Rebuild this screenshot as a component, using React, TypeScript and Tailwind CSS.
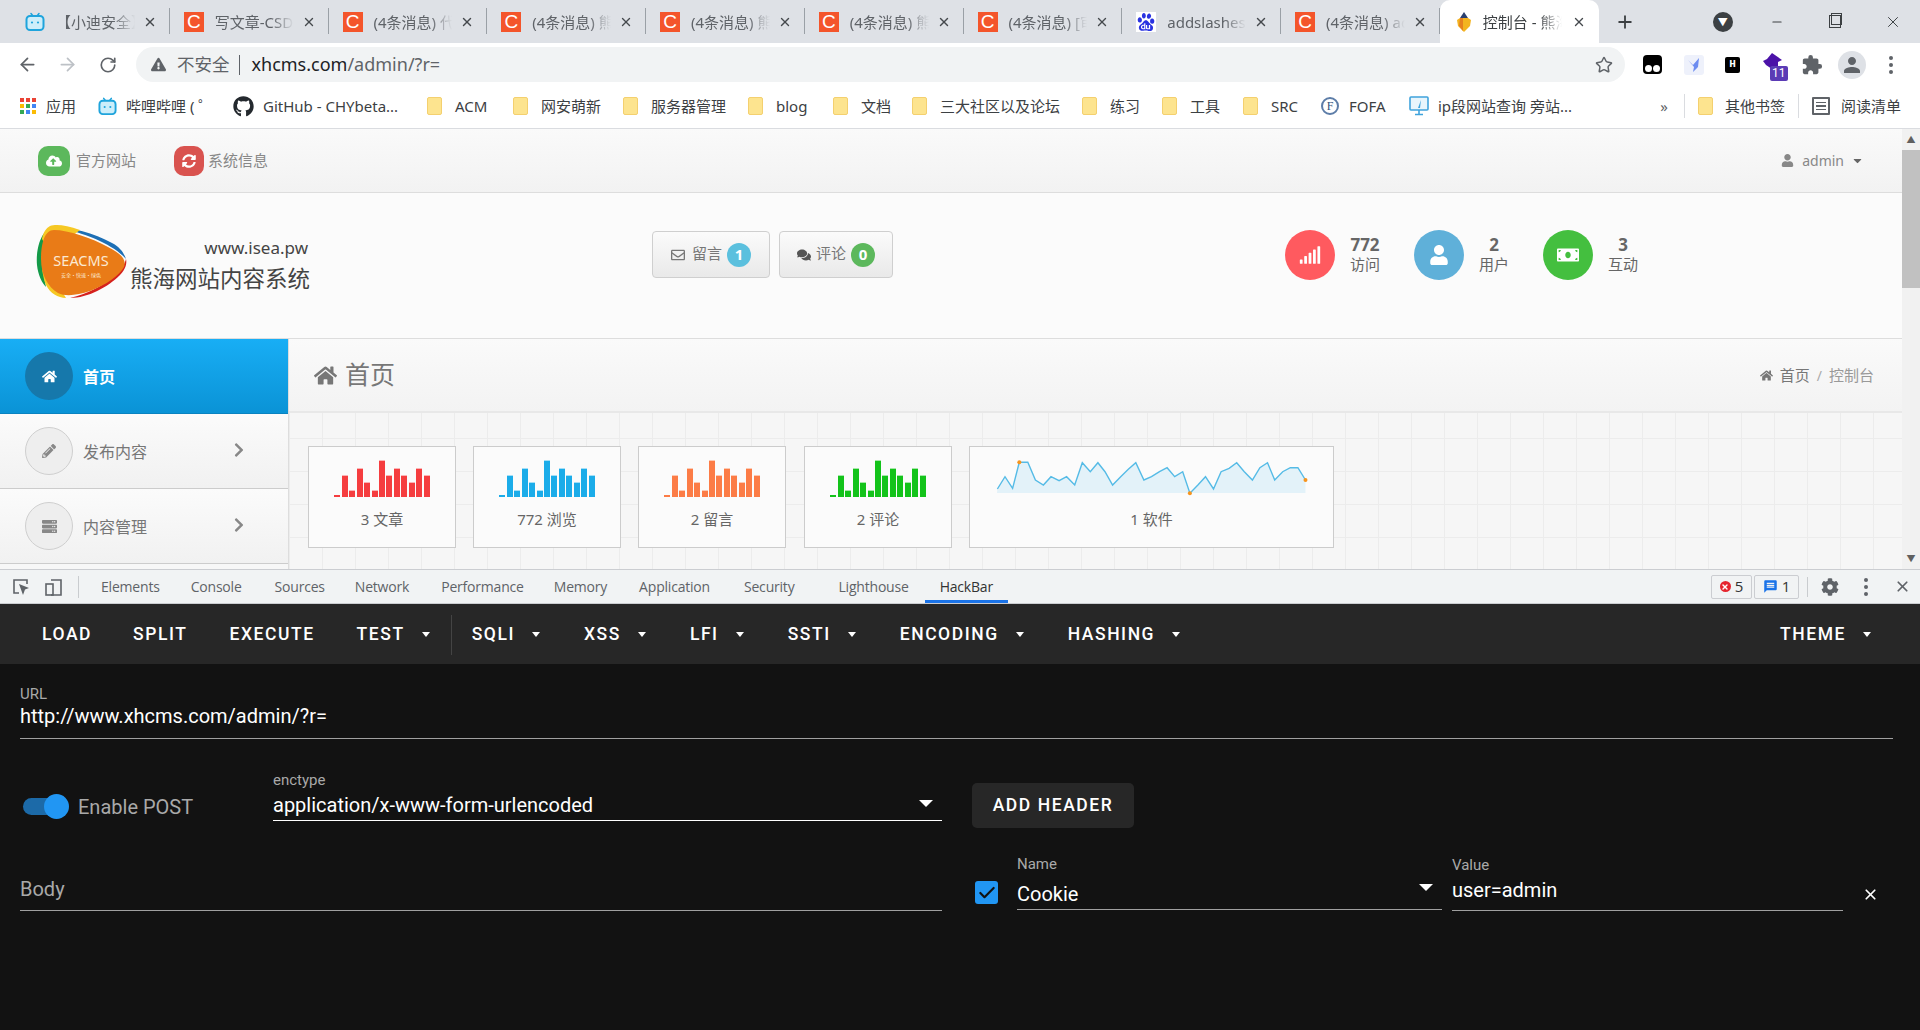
import {
  FaHome,
  FaPencilAlt,
  FaServer,
  FaRegEnvelope,
  FaComments,
  FaSignal,
  FaUser,
  FaMoneyBill,
  FaChevronRight,
  FaCloudUploadAlt,
  FaSyncAlt,
  FaGithub,
  FaExclamationTriangle,
  FaCaretDown,
  FaCog,
} from "react-icons/fa";
import { SiBaidu } from "react-icons/si";
import { MdExtension, MdPerson, MdMessage } from "react-icons/md";
import { ArrowLeft, ArrowRight, RotateCw, Star, Plus, Minus, X, Check } from "lucide-react";

const cjk = "font-['Noto_Sans','Noto_Sans_CJK_SC',sans-serif]";
const roboto = "font-['Roboto','Noto_Sans_CJK_SC',sans-serif]";

const Bili = ({ size = 20 }: { size?: number }) => (
  <svg width={size} height={size} viewBox="0 0 20 20" fill="none">
    <path d="M6 1.5 8 4M14 1.5 12 4" stroke="#1fa4dc" strokeWidth="1.6" strokeLinecap="round" />
    <rect x="1.5" y="4" width="17" height="14" rx="3.5" fill="#cdeefa" stroke="#1fa4dc" strokeWidth="2" />
    <circle cx="7" cy="10.5" r="1.1" fill="#1fa4dc" />
    <circle cx="13" cy="10.5" r="1.1" fill="#1fa4dc" />
  </svg>
);

const Csdn = () => (
  <span className="flex h-5 w-5 items-center justify-center bg-[#f4552b] font-['Liberation_Sans',sans-serif] text-[19px] leading-none text-white">
    C
  </span>
);

const Pencil = () => (
  <svg width="20" height="22" viewBox="0 0 20 22">
    <path d="M10 1 14 7H6z" fill="#2a3f6f" />
    <path d="M3 9 6 7h8l3 2-1 6-6 6-6-6z" fill="#f3b420" />
    <path d="M6 7h3v13L5 15z" fill="#e5801f" />
  </svg>
);

const tabs = [
  { title: "【小迪安全】Web安全", icon: <Bili /> },
  { title: "写文章-CSDN博客", icon: <Csdn /> },
  { title: "(4条消息) 代码审计", icon: <Csdn /> },
  { title: "(4条消息) 熊海CMS", icon: <Csdn /> },
  { title: "(4条消息) 熊海CMS", icon: <Csdn /> },
  { title: "(4条消息) 熊海CMS", icon: <Csdn /> },
  { title: "(4条消息) [审计]", icon: <Csdn /> },
  {
    title: "addslashes_百度",
    icon: (
      <span className="flex h-5 w-5 items-center justify-center bg-white">
        <SiBaidu size={18} className="text-[#2932e1]" />
      </span>
    ),
  },
  { title: "(4条消息) addslashes", icon: <Csdn /> },
];

const Folder = () => (
  <span className="h-[18px] w-[15px] shrink-0 rounded-[2px] border border-[#f4d06f] bg-[#fde48f]" />
);

const Apps = () => (
  <span className="grid w-[16px] shrink-0 grid-cols-3 gap-[2px]">
    {["#ea4335", "#ea4335", "#ea4335", "#fbbc04", "#34a853", "#4285f4", "#34a853", "#4285f4", "#fbbc04"].map((c, i) => (
      <span key={i} className="h-[4px] w-[4px]" style={{ background: c }} />
    ))}
  </span>
);

const bookmarks = [
  { w: "w-[78px]", gap: "gap-[10px]", label: "应用", icon: <Apps /> },
  { w: "w-[135px]", gap: "gap-[9px]", label: "哔哩哔哩 ( ゜", icon: <Bili size={19} /> },
  { w: "w-[194px]", gap: "gap-[9px]", label: "GitHub - CHYbeta...", icon: <FaGithub size={21} className="shrink-0 text-[#24292e]" /> },
  { w: "w-[86px]", gap: "gap-[13px]", label: "ACM", icon: <Folder /> },
  { w: "w-[110px]", gap: "gap-[13px]", label: "网安萌新", icon: <Folder /> },
  { w: "w-[125px]", gap: "gap-[13px]", label: "服务器管理", icon: <Folder /> },
  { w: "w-[85px]", gap: "gap-[13px]", label: "blog", icon: <Folder /> },
  { w: "w-[79px]", gap: "gap-[13px]", label: "文档", icon: <Folder /> },
  { w: "w-[170px]", gap: "gap-[13px]", label: "三大社区以及论坛", icon: <Folder /> },
  { w: "w-[80px]", gap: "gap-[13px]", label: "练习", icon: <Folder /> },
  { w: "w-[81px]", gap: "gap-[13px]", label: "工具", icon: <Folder /> },
  { w: "w-[78px]", gap: "gap-[13px]", label: "SRC", icon: <Folder /> },
  {
    w: "w-[88px]",
    gap: "gap-[10px]",
    label: "FOFA",
    icon: (
      <span className="flex h-[18px] w-[18px] items-center justify-center rounded-full border-2 border-[#5d7da8] font-['Liberation_Serif',serif] text-[12px] leading-none text-[#33527c]">
        F
      </span>
    ),
  },
  {
    w: "w-[245px]",
    gap: "gap-[9px]",
    label: "ip段网站查询 旁站...",
    icon: (
      <svg width="20" height="20" viewBox="0 0 20 20" className="shrink-0">
        <rect x="1" y="1" width="18" height="13" rx="1" fill="#e8f5fc" stroke="#3fa3dc" strokeWidth="1.6" />
        <path d="M9 12 12 4l-1 8z" fill="#3fa3dc" />
        <path d="M10 14v4M6 18.5h8" stroke="#3fa3dc" strokeWidth="1.6" />
      </svg>
    ),
  },
];

function BrowserChrome() {
  return (
    <div className={`${cjk} text-[15px] text-[#5f6368]`}>
      <div className="flex h-[43px] bg-[#dee1e6] pl-[11px]">
        {tabs.map((tab, i) => (
          <div key={i} className="relative flex h-full w-[158.75px] shrink-0 items-center pl-[14px] pr-[13px]">
            <span className="flex w-[20px] shrink-0 justify-center">{tab.icon}</span>
            <span className="ml-[11px] mr-[8px] min-w-0 flex-1 overflow-hidden whitespace-nowrap pt-[1px] [mask-image:linear-gradient(to_right,black_72%,transparent)]">
              {tab.title}
            </span>
            <X size={14} strokeWidth={2.4} className="shrink-0 text-[#45494d]" />
            <span className="absolute right-0 top-[8px] h-[26px] w-px bg-[#9aa0a6]" />
          </div>
        ))}
        <div className="flex h-full w-[159px] shrink-0 items-center rounded-t-[10px] bg-white pl-[14px] pr-[13px]">
          <span className="flex w-[20px] shrink-0 justify-center"><Pencil /></span>
          <span className="ml-[9px] mr-[10px] min-w-0 flex-1 overflow-hidden whitespace-nowrap pt-[1px] text-[#3c4043] [mask-image:linear-gradient(to_right,black_72%,transparent)]">
            控制台 - 熊海网站内容系统
          </span>
          <X size={14} strokeWidth={2.4} className="shrink-0 text-[#45494d]" />
        </div>
        <div className="flex h-full w-[52px] items-center justify-center">
          <Plus size={20} strokeWidth={2.2} className="text-[#3c4043]" />
        </div>
        <div className="ml-[62px] flex h-full items-center">
          <span className="flex h-[20px] w-[20px] items-center justify-center rounded-full bg-[#3c4043] text-[10px] leading-none text-white">▼</span>
        </div>
        <div className="ml-[24px] flex h-full w-[40px] items-center justify-center"><Minus size={14} className="text-[#3c4043]" /></div>
        <div className="ml-[18px] flex h-full w-[40px] items-center justify-center">
          <span className="relative h-[13px] w-[12px] border border-[#3c4043] before:absolute before:-top-[3px] before:left-[1px] before:h-[12px] before:w-[11px] before:border before:border-[#3c4043]" />
        </div>
        <div className="ml-[18px] flex h-full w-[40px] items-center justify-center"><X size={18} strokeWidth={1.3} className="text-[#3c4043]" /></div>
      </div>

      <div className="flex h-[43px] items-center bg-white">
        <ArrowLeft size={21} strokeWidth={2} className="ml-[17px] text-[#5f6368]" />
        <ArrowRight size={21} strokeWidth={2} className="ml-[19px] text-[#bdc1c6]" />
        <RotateCw size={18} strokeWidth={2.2} className="ml-[21px] text-[#5f6368]" />
        <div className="ml-[19px] flex h-[35px] w-[1489px] items-center rounded-full bg-[#f1f3f4] pl-[15px] pr-[12px]">
          <FaExclamationTriangle size={15} className="text-[#5f6368]" />
          <span className="ml-[11px] text-[17.5px]">不安全</span>
          <span className="ml-[9px] mr-[12px] h-[20px] w-px bg-[#5f6368]" />
          <span className="text-[18px]"><span className="text-[#202124]">xhcms.com</span>/admin/?r=</span>
          <Star size={18} strokeWidth={2} className="ml-auto text-[#5f6368]" />
        </div>
        <span className="ml-[18px] flex h-[19px] w-[19px] items-end justify-center gap-px rounded-[4px] bg-black pb-[2px]">
          <span className="h-[7px] w-[7px] rounded-full bg-white" />
          <span className="h-[7px] w-[7px] rounded-full bg-white" />
        </span>
        <svg width="20" height="20" viewBox="0 0 20 20" className="ml-[22px]">
          <rect width="20" height="20" rx="3" fill="#eef1fb" />
          <path d="M4 5 9 10l6-7-1 9-5 5 1-5z" fill="#6d8cf0" />
        </svg>
        <span className="ml-[21px] flex h-[16px] w-[15px] items-center justify-center rounded-[2px] bg-black font-['Liberation_Mono',monospace] text-[11px] font-bold text-white">H</span>
        <span className="relative ml-[23px] h-[24px] w-[27px]">
          <svg width="24" height="18" viewBox="0 0 24 18"><path d="M9 0 19 7 15 9v4L9 16 3 12 0 8 4 6z" fill="#4b12a8" /></svg>
          <span className={`${roboto} absolute -bottom-[4px] left-[7px] rounded-[2px] bg-[#5b3bb5] px-[2px] text-[12px] leading-[15px] text-white`}>11</span>
        </span>
        <MdExtension size={22} className="ml-[11px] text-[#5f6368]" />
        <span className="ml-[15px] flex h-[28px] w-[28px] items-center justify-center rounded-full bg-[#dee1e6]">
          <MdPerson size={24} className="text-[#5f6368]" />
        </span>
        <span className="ml-[23px] flex flex-col gap-[3px]">
          <span className="h-[4px] w-[4px] rounded-full bg-[#5f6368]" />
          <span className="h-[4px] w-[4px] rounded-full bg-[#5f6368]" />
          <span className="h-[4px] w-[4px] rounded-full bg-[#5f6368]" />
        </span>
      </div>

      <div className="flex h-[43px] items-center border-b border-[#dadce0] bg-white pl-[20px] pb-[2px] text-[15px] text-[#3c4043]">
        {bookmarks.map((b) => (
          <div key={b.label} className={`flex shrink-0 items-center overflow-hidden whitespace-nowrap ${b.w} ${b.gap}`}>
            {b.icon}
            <span>{b.label}</span>
          </div>
        ))}
        <span className="w-[20px] text-center text-[#5f6368]">»</span>
        <span className="ml-[10px] h-[24px] w-px bg-[#dadce0]" />
        <div className="ml-[13px] flex items-center gap-[12px]">
          <Folder />
          <span>其他书签</span>
        </div>
        <span className="ml-[13px] h-[24px] w-px bg-[#dadce0]" />
        <div className="ml-[13px] flex items-center gap-[11px]">
          <span className="flex h-[18px] w-[18px] flex-col justify-center gap-[2px] rounded-[1px] border-2 border-[#5f6368] px-[2px]">
            <span className="h-[1.5px] bg-[#5f6368]" />
            <span className="h-[1.5px] bg-[#5f6368]" />
            <span className="h-[1.5px] bg-[#5f6368]" />
          </span>
          <span>阅读清单</span>
        </div>
      </div>
    </div>
  );
}

function Logo() {
  return (
    <svg width="92" height="74" viewBox="0 0 92 74" className="mb-[8px] shrink-0">
      <path d="M20 2C34 2 58 8 76 18 84 22 88 28 90 34 78 20 50 8 20 2z" fill="#1d6fb5" />
      <path d="M10 6C2 14 0 30 1 40 2 50 6 58 10 62 6 44 6 24 10 6z" fill="#139a48" />
      <path d="M14 1C20 -1 30 0 44 5L14 28 6 14C7 8 10 3 14 1zM6 44 22 60 30 73C22 73 14 68 10 60 8 56 7 50 6 44z" fill="#f6c824" />
      <path d="M34 73C52 73 72 62 84 50 90 44 91 38 90 34 88 44 70 64 34 73z" fill="#d5211d" />
      <path d="M5 34C5 20 8 5 18 5 32 5 56 13 72 22 84 28 91 34 88 42 84 50 70 60 54 66 42 70 30 72 22 68 12 62 5 50 5 34z" fill="#e97b17" />
      <text x="45" y="41" textAnchor="middle" fill="#fbe9d2" fontSize="14.5" fontFamily="'Noto Sans',sans-serif">SEACMS</text>
      <text x="45" y="52" textAnchor="middle" fill="#fbe9d2" fontSize="5" fontFamily="'Noto Sans CJK SC',sans-serif">安全•快速•绿色</text>
    </svg>
  );
}

const barHeights = ["h-[2px]", "h-[22px]", "h-[7px]", "h-[29px]", "h-[15px]", "h-[7px]", "h-[37px]", "h-[22px]", "h-[29px]", "h-[22px]", "h-[15px]", "h-[29px]", "h-[22px]"];

function BarCard({ label, bar, top }: { label: string; bar: string; top: string }) {
  return (
    <div className="flex h-[102px] w-[148px] shrink-0 flex-col items-center border border-[#cccccc] bg-[#fbfbfb] pt-[13px] text-[15px] text-[#666666]">
      <div className="flex h-[37px] items-end gap-[1.45px]">
        {barHeights.map((h, i) => (
          <span key={i} className={`w-[6px] ${i === 0 ? "" : "border-t"} ${h} ${bar} ${top}`} />
        ))}
      </div>
      <span className="mt-[12px] leading-[20px]">{label}</span>
    </div>
  );
}

const spark = [
  [667, 177], [684, 140], [701, 175], [716, 97], [735, 97], [752, 150], [770, 165], [787, 140], [805, 152], [822, 140],
  [840, 165], [857, 98], [875, 125], [892, 98], [908, 125], [925, 165], [943, 140], [960, 118], [977, 98], [995, 150],
  [1012, 140], [1030, 125], [1047, 113], [1064, 140], [1082, 125], [1098, 190], [1116, 165], [1133, 140], [1151, 177],
  [1168, 125], [1186, 115], [1203, 98], [1220, 125], [1238, 150], [1255, 113], [1272, 98], [1288, 150], [1306, 125],
  [1323, 113], [1340, 113], [1357, 150],
].map(([x, y]) => [(x - 666) / 2.24, (y - 90) / 3]);

function SparkCard() {
  const line = spark.map(([x, y]) => `${x.toFixed(1)},${y.toFixed(1)}`).join(" ");
  const last = spark[spark.length - 1];
  return (
    <div className="flex h-[102px] w-[365px] shrink-0 flex-col items-center border border-[#cccccc] bg-[#fbfbfb] pt-[13px] text-[15px] text-[#666666]">
      <svg width="310" height="38" viewBox="0 0 310 38" className="overflow-visible">
        <polygon points={`0,33 ${line} ${last[0]},33`} fill="#e3f2f9" />
        <polyline points={line} fill="none" stroke="#55bbe6" strokeWidth="1.4" />
        <circle cx={spark[3][0]} cy={spark[3][1]} r="2" fill="#f7941d" />
        <circle cx={spark[25][0]} cy={spark[25][1]} r="2" fill="#f7941d" />
        <circle cx={last[0]} cy={last[1]} r="2" fill="#f7941d" />
      </svg>
      <span className="mt-[11px] leading-[20px]">1 软件</span>
    </div>
  );
}

function Stat({ bg, icon, value, label }: { bg: string; icon: React.ReactNode; value: string; label: string }) {
  return (
    <div className="flex w-[129px] shrink-0 items-center">
      <span className={`flex h-[50px] w-[50px] shrink-0 items-center justify-center rounded-full text-white ${bg}`}>{icon}</span>
      <div className="mb-[2px] ml-[15px] flex w-[30px] flex-col items-center text-[#666666]">
        <span className="text-[17px] font-bold leading-[20px]">{value}</span>
        <span className="text-[15px] leading-[18px]">{label}</span>
      </div>
    </div>
  );
}

function TopButton({ icon, label, badge, badgeBg, w }: { icon: React.ReactNode; label: string; badge: string; badgeBg: string; w: string }) {
  return (
    <div className={`flex h-[47px] items-center justify-center gap-[5px] rounded-[4px] border border-[#cfcfcf] bg-gradient-to-b from-[#fbfbfb] to-[#e9e9e9] text-[15px] text-[#777777] ${w}`}>
      {icon}
      <span className="-mt-[2px]">{label}</span>
      <span className={`flex h-[24px] w-[24px] items-center justify-center rounded-full text-[15px] font-bold text-white ${badgeBg}`}>{badge}</span>
    </div>
  );
}

function MenuItem({ icon, label, active }: { icon: React.ReactNode; label: string; active?: boolean }) {
  return (
    <div
      className={
        active
          ? "flex h-[75px] items-center border-b border-[#0a83c0] bg-gradient-to-b from-[#18aef5] to-[#0a93d6] pl-[25px] text-[16px] font-bold text-white"
          : "flex h-[75px] items-center border-b border-[#cccccc] bg-gradient-to-b from-[#fbfbfb] to-[#f1f1f1] pl-[25px] text-[16px] text-[#777777]"
      }
    >
      <span className={active ? "flex h-[48px] w-[48px] items-center justify-center rounded-full bg-[#1678ab]" : "flex h-[48px] w-[48px] items-center justify-center rounded-full border border-[#cfcfcf] bg-[#eeeeee] text-[#888888]"}>
        {icon}
      </span>
      <span className="ml-[10px] pt-[2px]">{label}</span>
      {!active && <FaChevronRight size={16} className="ml-[84px] -mt-[3px] text-[#888888]" />}
    </div>
  );
}

function CmsPage() {
  return (
    <div className={`${cjk} flex h-[440px] overflow-hidden`}>
      <div className="min-w-0 flex-1">
        <div className="flex h-[64px] items-center border-b border-[#dddddd] bg-gradient-to-b from-[#fafafa] to-[#f2f2f2] pl-[38px] pr-[38px] text-[15px] text-[#888888]">
          <span className="flex h-[30px] w-[32px] items-center justify-center rounded-[10px] bg-[#5cb85c] text-white"><FaCloudUploadAlt size={16} /></span>
          <span className="ml-[6px]">官方网站</span>
          <span className="ml-[38px] flex h-[30px] w-[30px] items-center justify-center rounded-[10px] bg-[#d9534f] text-white"><FaSyncAlt size={14} /></span>
          <span className="ml-[4px]">系统信息</span>
          <FaUser size={13} className="ml-auto text-[#888888]" />
          <span className="ml-[8px] text-[14px]">admin</span>
          <FaCaretDown size={13} className="ml-[7px] text-[#666666]" />
        </div>

        <div className="flex h-[146px] items-center border-b border-[#dddddd] bg-[#fbfbfb]">
          <div className="ml-[36px] flex w-[616px] shrink-0 items-center">
            <Logo />
            <div className="ml-[2px] flex w-[180px] flex-col items-end text-[#444444]">
              <span className="mr-[2px] text-[17px] leading-[22px]">www.isea.pw</span>
              <span className="mt-[5px] whitespace-nowrap text-[22.5px] leading-[30px]">熊海网站内容系统</span>
            </div>
          </div>
          <div className="mb-[22px] flex gap-[9px]">
            <TopButton w="w-[118px]" icon={<FaRegEnvelope size={14} className="mr-[2px]" />} label="留言" badge="1" badgeBg="bg-[#5bc0de]" />
            <TopButton w="w-[114px]" icon={<FaComments size={14} className="text-[#555555]" />} label="评论" badge="0" badgeBg="bg-[#5cb85c]" />
          </div>
          <div className="mb-[22px] ml-[392px] flex">
            <Stat bg="bg-[#ff5a5f]" icon={<FaSignal size={22} />} value="772" label="访问" />
            <Stat bg="bg-[#5fb0d9]" icon={<FaUser size={20} />} value="2" label="用户" />
            <Stat bg="bg-[#44bf3f]" icon={<FaMoneyBill size={22} />} value="3" label="互动" />
          </div>
        </div>

        <div className="flex h-[230px]">
          <div className="w-[289px] shrink-0 border-r border-[#dddddd] bg-[#f7f7f7]">
            <MenuItem active icon={<FaHome size={15} />} label="首页" />
            <MenuItem icon={<FaPencilAlt size={14} />} label="发布内容" />
            <MenuItem icon={<FaServer size={15} />} label="内容管理" />
          </div>
          <div className="min-w-0 flex-1 bg-[#f6f6f6] bg-[linear-gradient(#ececec_1px,transparent_1px),linear-gradient(90deg,#ececec_1px,transparent_1px)] bg-[size:33px_33px]">
            <div className="flex h-[74px] items-center border-b-2 border-[#e8e8e8] bg-gradient-to-b from-[#fafafa] to-[#f3f3f3] pl-[25px] pr-[28px] text-[#777777]">
              <FaHome size={23} />
              <span className="ml-[8px] text-[25px]">首页</span>
              <FaHome size={13} className="ml-auto" />
              <span className="ml-[7px] text-[15px]">首页</span>
              <span className="mx-[7px] text-[14px] text-[#aaaaaa]">/</span>
              <span className="text-[15px] text-[#999999]">控制台</span>
            </div>
            <div className="flex pl-[19px] pt-[33px]">
              <BarCard label="3 文章" bar="bg-[#f53d3f]" top="border-[#fbb4b5]" />
              <div className="ml-[17px]"><BarCard label="772 浏览" bar="bg-[#1bace9]" top="border-[#a4dff7]" /></div>
              <div className="ml-[17px]"><BarCard label="2 留言" bar="bg-[#fc7c46]" top="border-[#fdc9b2]" /></div>
              <div className="ml-[18px]"><BarCard label="2 评论" bar="bg-[#13c31a]" top="border-[#a5e8a8]" /></div>
              <div className="ml-[17px]"><SparkCard /></div>
            </div>
          </div>
        </div>
      </div>
      <div className="flex w-[18px] shrink-0 flex-col items-center bg-[#f1f1f1] text-[9px] text-[#606060]">
        <span className="flex h-[21px] items-center leading-none">▲</span>
        <span className="h-[138px] w-full bg-[#c1c1c1]" />
        <span className="mt-auto flex h-[21px] items-center leading-none">▼</span>
      </div>
    </div>
  );
}

const devTabs = [
  { label: "Elements", cls: "ml-[22px]" },
  { label: "Console", cls: "ml-[31px]" },
  { label: "Sources", cls: "ml-[33px]" },
  { label: "Network", cls: "ml-[30px]" },
  { label: "Performance", cls: "ml-[32px]" },
  { label: "Memory", cls: "ml-[30px]" },
  { label: "Application", cls: "ml-[32px]" },
  { label: "Security", cls: "ml-[34px]" },
  { label: "Lighthouse", cls: "ml-[44px]" },
];

function DevTools() {
  return (
    <div className="flex h-[35px] items-center border-y border-[#cbcdd1] bg-[#f1f3f4] font-['Open_Sans','Noto_Sans',sans-serif] text-[14px] tracking-[-0.2px] text-[#5f6368]">
      <svg width="20" height="20" viewBox="0 0 20 20" fill="none" className="ml-[11px]">
        <path d="M16 7V3H3v13h5" stroke="#5f6368" strokeWidth="1.6" />
        <path d="M8 7l10 4-4 1.6L12 18z" fill="#5f6368" />
      </svg>
      <svg width="20" height="20" viewBox="0 0 20 20" fill="none" className="ml-[13px]">
        <path d="M7 3h10v15H7" stroke="#5f6368" strokeWidth="1.6" />
        <rect x="2" y="7" width="7" height="11" stroke="#5f6368" strokeWidth="1.6" />
      </svg>
      <span className="ml-[14px] h-[22px] w-px bg-[#c9cccf]" />
      {devTabs.map((t) => (
        <span key={t.label} className={t.cls}>{t.label}</span>
      ))}
      <span className="relative ml-[16px] flex h-full items-center px-[15px] text-[#333333]">
        HackBar
        <span className="absolute bottom-0 left-0 h-[3px] w-full bg-[#1a73e8]" />
      </span>
      <span className="ml-auto flex h-[24px] w-[41px] items-center justify-center gap-[4px] rounded-[2px] border border-[#cbcdd1] text-[15px] text-[#333333]">
        <span className="flex h-[11px] w-[11px] items-center justify-center rounded-full bg-[#e5252f] text-white"><X size={8} strokeWidth={4} /></span>
        5
      </span>
      <span className="ml-[2px] flex h-[24px] w-[45px] items-center justify-center gap-[4px] rounded-[2px] border border-[#cbcdd1] text-[15px] text-[#333333]">
        <MdMessage size={15} className="text-[#1a73e8]" />
        1
      </span>
      <span className="ml-[8px] h-[20px] w-px bg-[#c9cccf]" />
      <FaCog size={18} className="ml-[13px] text-[#5f6368]" />
      <span className="ml-[25px] flex flex-col gap-[3px]">
        <span className="h-[4px] w-[4px] rounded-full bg-[#5f6368]" />
        <span className="h-[4px] w-[4px] rounded-full bg-[#5f6368]" />
        <span className="h-[4px] w-[4px] rounded-full bg-[#5f6368]" />
      </span>
      <X size={17} strokeWidth={2.4} className="ml-[26px] mr-[9px] text-[#5f6368]" />
    </div>
  );
}

function HbButton({ label, menu, cls }: { label: string; menu?: boolean; cls: string }) {
  return (
    <span className={`flex shrink-0 items-center ${cls}`}>
      {label}
      {menu && <span className="ml-[17px] h-0 w-0 border-x-[4px] border-t-[5px] border-x-transparent border-t-white" />}
    </span>
  );
}

const Caret = ({ cls }: { cls: string }) => (
  <span className={`h-0 w-0 border-x-[7px] border-t-[7px] border-x-transparent border-t-white ${cls}`} />
);

function HackBar() {
  return (
    <div className={`${roboto} h-[427px] bg-[#121212] text-white`}>
      <div className="flex h-[60px] items-center bg-[#272727] pl-[42px] pr-[49px] pt-[1px] text-[17.5px] font-medium tracking-[1.56px]">
        <HbButton label="LOAD" cls="" />
        <HbButton label="SPLIT" cls="ml-[41px]" />
        <HbButton label="EXECUTE" cls="ml-[42px]" />
        <HbButton label="TEST" menu cls="ml-[42px]" />
        <span className="ml-[21px] h-[40px] w-px bg-[#444444]" />
        <HbButton label="SQLI" menu cls="ml-[20px]" />
        <HbButton label="XSS" menu cls="ml-[44px]" />
        <HbButton label="LFI" menu cls="ml-[44px]" />
        <HbButton label="SSTI" menu cls="ml-[44px]" />
        <HbButton label="ENCODING" menu cls="ml-[44px]" />
        <HbButton label="HASHING" menu cls="ml-[44px]" />
        <HbButton label="THEME" menu cls="ml-auto" />
      </div>
      <div className="pl-[20px] pr-[27px] pt-[21px]">
        <div className="border-b border-[#a0a0a0] pb-[8px]">
          <div className="text-[15px] leading-[18px] text-[#a9a9a9]">URL</div>
          <div className="text-[20px] leading-[27px]">http://www.xhcms.com/admin/?r=</div>
        </div>
      </div>
      <div className="flex pl-[20px] pt-[32px]">
        <div className="w-[922px] shrink-0">
          <div className="flex h-[50px]">
            <div className="flex w-[253px] shrink-0 items-center pt-[21px]">
              <span className="relative ml-[3px] h-[17px] w-[42px] rounded-full bg-[#1c6aa8]">
                <span className="absolute -top-[4px] right-[-4px] h-[25px] w-[25px] rounded-full bg-[#2196f3]" />
              </span>
              <span className="ml-[13px] text-[20px] text-[#a9a9a9]">Enable POST</span>
            </div>
            <div className="relative flex-1 border-b border-white">
              <div className="text-[15px] leading-[18px] text-[#a9a9a9]">enctype</div>
              <div className="mt-[2px] text-[20px] leading-[28px]">application/x-www-form-urlencoded</div>
              <Caret cls="absolute right-[9px] top-[29px]" />
            </div>
          </div>
          <div className="mt-[54px] border-b border-[#a0a0a0] pb-[7px] text-[20px] leading-[28px] text-[#a9a9a9]">Body</div>
        </div>
        <div className="ml-[30px] flex-1">
          <div className="mt-[12px] flex h-[45px] w-[162px] items-center justify-center rounded-[5px] bg-[#272727] text-[17.5px] font-medium tracking-[1.56px]">
            ADD HEADER
          </div>
          <div className="mt-[27px] flex items-start">
            <span className="ml-[3px] mt-[26px] flex h-[23px] w-[23px] shrink-0 items-center justify-center rounded-[3px] bg-[#2196f3]">
              <Check size={20} strokeWidth={2.6} className="text-[#121212]" />
            </span>
            <div className="relative ml-[19px] h-[55px] w-[425px] shrink-0 border-b border-[#a0a0a0]">
              <div className="text-[15px] leading-[18px] text-[#a9a9a9]">Name</div>
              <div className="mt-[7px] text-[20px] leading-[28px]">Cookie</div>
              <Caret cls="absolute right-[9px] top-[29px]" />
            </div>
            <div className="ml-[10px] h-[56px] w-[391px] shrink-0 border-b border-[#a0a0a0]">
              <div className="mt-[1px] text-[15px] leading-[18px] text-[#a9a9a9]">Value</div>
              <div className="mt-[4px] text-[20px] leading-[24px]">user=admin</div>
            </div>
            <X size={17} strokeWidth={2.4} className="ml-[19px] mt-[31px] text-white" />
          </div>
        </div>
      </div>
    </div>
  );
}

export default function App() {
  return (
    <div className="h-[1030px] w-[1920px] overflow-hidden bg-white">
      <BrowserChrome />
      <CmsPage />
      <DevTools />
      <HackBar />
    </div>
  );
}
